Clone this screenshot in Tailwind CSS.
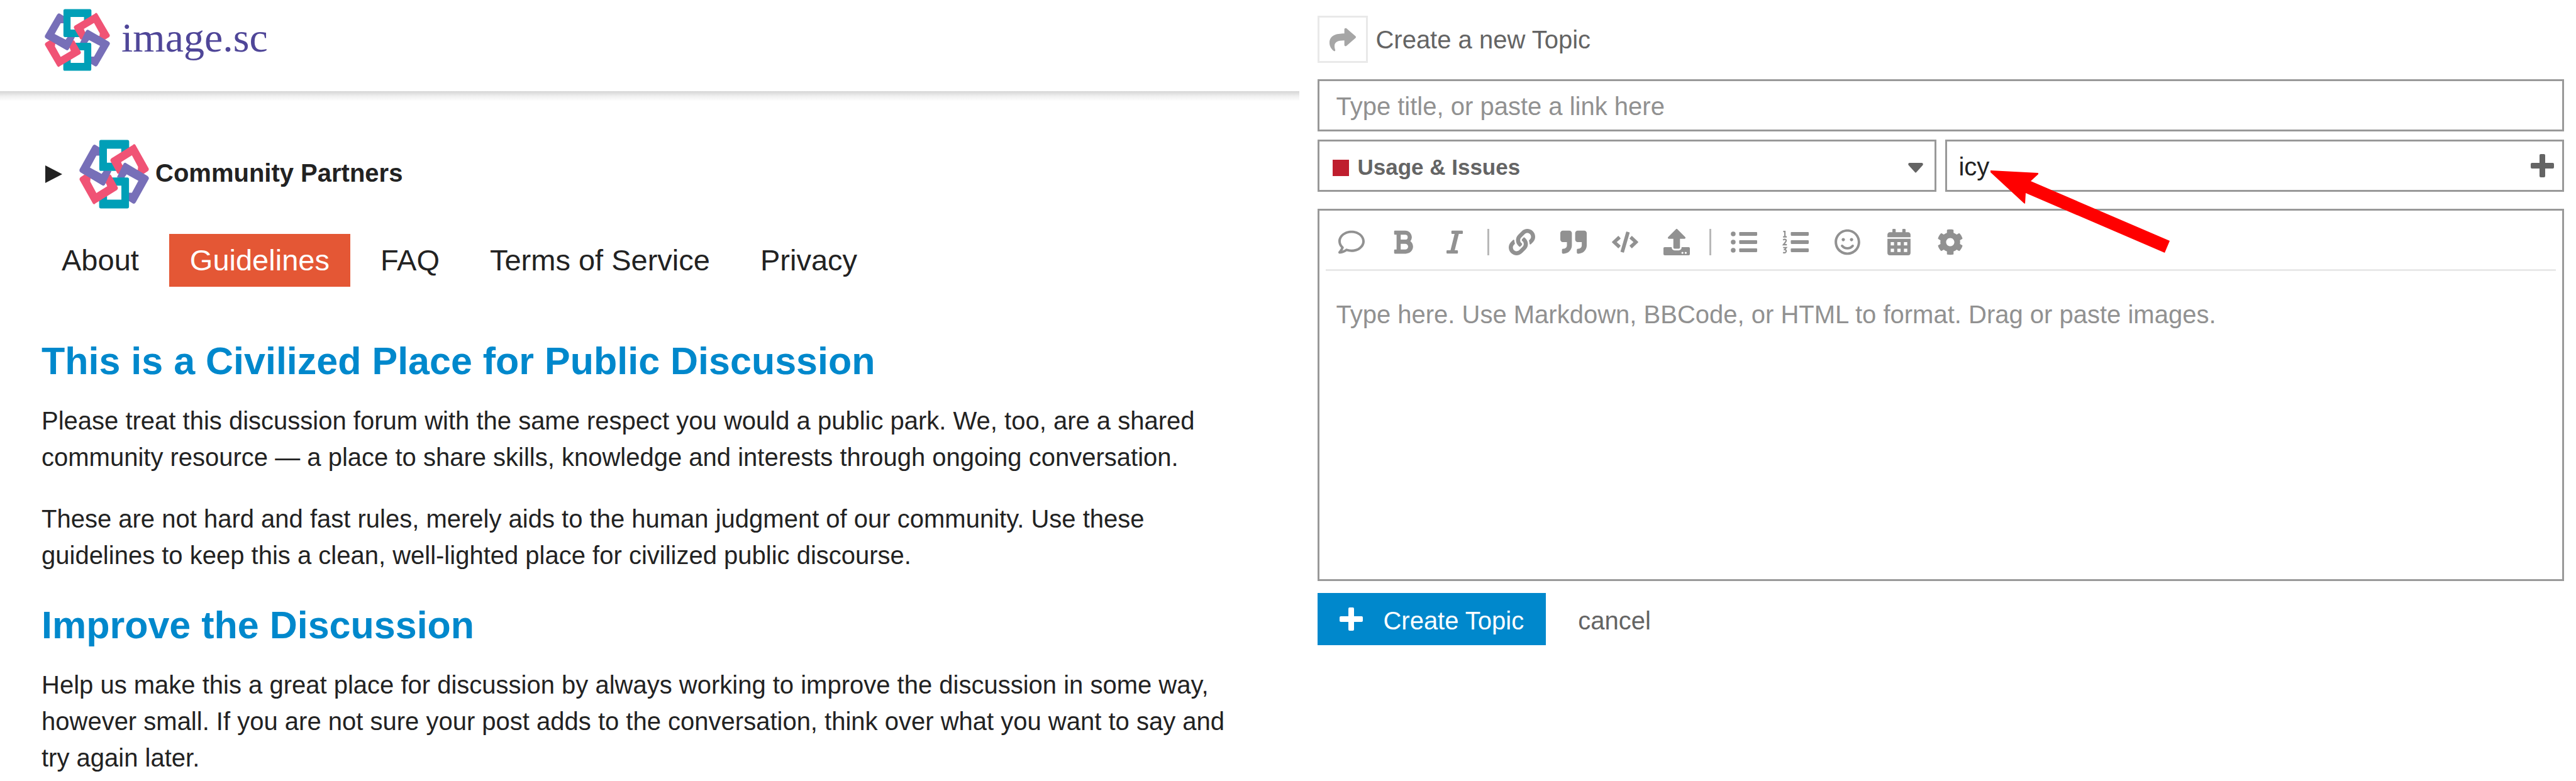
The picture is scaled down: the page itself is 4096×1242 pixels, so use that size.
<!DOCTYPE html>
<html lang="en">
<head>
<meta charset="utf-8">
<title>image.sc forum</title>
<script src="https://cdn.jsdelivr.net/npm/@tailwindcss/browser@4"></script>
</head>
<body class="min-h-screen overflow-x-hidden bg-white font-['Liberation_Sans',Arial,sans-serif] text-[40px] leading-[58px] text-[#222222]">
<svg class="absolute size-0" aria-hidden="true">
  <defs>
    <clipPath id="lower"><rect x="0" y="232" width="533" height="260"/></clipPath>
    <path id="teal" fill="#009fb7" d="M177 30H357Q369 30 369 42V100L315 132V87H217V178H262L285 232H177Q165 232 165 220V42Q165 30 177 30Z"/>
    <path id="pink" fill="#f05375" fill-rule="evenodd" d="M395 63Q403 53 412 63L502 215Q506 226 496 234L470 250H290L242 168Q238 158 248 150ZM388 130L314 174L320 190L350 225H428L430 205Z"/>
    <path id="purple" fill="#776fb8" fill-rule="evenodd" d="M330 186Q338 174 350 182L494 264Q508 273 502 286L414 436Q404 450 392 442L340 410V290L286 272ZM338 272L352 254L432 296L388 374H345V290Z"/>
    <symbol id="logo" viewBox="28 28 477 450" preserveAspectRatio="none">
      <use href="#purple" transform="rotate(180 266.5 253)"/>
      <use href="#teal"/>
      <use href="#pink"/>
      <use href="#purple"/>
      <use href="#teal" transform="rotate(180 266.5 253)"/>
      <use href="#pink" transform="rotate(180 266.5 253)"/>
      <g clip-path="url(#lower)"><use href="#purple" transform="rotate(180 266.5 253)"/></g>
    </symbol>
  </defs>
</svg>
<div class="flex">
  <div class="w-[50.45%] shrink-0">
    <header>
      <div class="flex h-[145px] items-start gap-[18px] pt-[14px] pl-[71px]">
        <svg class="h-[99px] w-[104px]" aria-hidden="true"><use href="#logo"/></svg>
        <a href="#" class="pt-[6px] font-['Liberation_Serif',serif] text-[66px] leading-[80px] text-[#4f4698]">image.sc</a>
      </div>
      <div class="h-4 bg-linear-to-b from-[#d5d5d5] via-[#f0f0f0] to-white"></div>
    </header>
    <main class="pt-[61px] pl-[66px]">
      <details>
        <summary class="flex h-[110px] list-none items-center pl-[6px] font-bold">
          <svg class="h-7 w-[27px]" viewBox="0 0 27 28" fill="#222222" aria-hidden="true"><path d="M0 0L27 14L0 28Z"/></svg>
          <svg class="mr-[10px] ml-[27px] h-[110px] w-[111px]" aria-hidden="true"><use href="#logo"/></svg>
          <span class="pb-1">Community Partners</span>
        </summary>
      </details>
      <nav class="mt-10 flex gap-4 text-[47px] leading-[84px]">
        <a href="#" class="px-8">About</a>
        <a href="#" class="bg-[#e45735] px-[33px] text-white">Guidelines</a>
        <a href="#" class="px-8">FAQ</a>
        <a href="#" class="px-8">Terms of Service</a>
        <a href="#" class="px-8">Privacy</a>
      </nav>
      <article class="max-w-[1900px]">
        <h2 class="mt-20 text-[61px] leading-[76px] font-bold text-[#0088cc]">This is a Civilized Place for Public Discussion</h2>
        <p class="mt-7">Please treat this discussion forum with the same respect you would a public park. We, too, are a shared community resource — a place to share skills, knowledge and interests through ongoing conversation.</p>
        <p class="mt-10">These are not hard and fast rules, merely aids to the human judgment of our community. Use these guidelines to keep this a clean, well-lighted place for civilized public discourse.</p>
        <h2 class="mt-11 text-[61px] leading-[76px] font-bold text-[#0088cc]">Improve the Discussion</h2>
        <p class="mt-7">Help us make this a great place for discussion by always working to improve the discussion in some way, however small. If you are not sure your post adds to the conversation, think over what you want to say and try again later.</p>
      </article>
    </main>
  </div>

  <form class="min-w-0 flex-1 pt-[25px] pr-[19px] pl-[29px] text-[#646464]">
    <div class="flex items-center gap-3">
      <button type="button" aria-label="Reply options" class="flex h-[75px] w-20 items-center justify-center border-[3px] border-[#e9e9e9]">
        <svg class="size-[42px]" viewBox="0 0 512 512" fill="#a6a6a6"><path d="M503.691 189.836L327.687 37.851C312.281 24.546 288 35.347 288 56.015v80.053C127.371 137.907 0 170.100 0 322.326c0 61.441 39.581 122.309 83.333 154.132 13.653 9.931 33.111-2.533 28.077-18.631C66.066 312.814 132.917 274.316 288 272.085V360c0 20.700 24.300 31.453 39.687 18.164l176.004-152c11.071-9.562 11.086-26.753 0-36.328z"/></svg>
      </button>
      <span>Create a new Topic</span>
    </div>
    <input type="text" aria-label="Title" placeholder="Type title, or paste a link here" class="mt-[26px] block h-[83px] w-full border-[3px] border-[#999999] px-[26px] pt-1 placeholder:text-[#919191]">
    <div class="mt-[13px] flex gap-[14px]">
      <div class="relative w-[984px] min-w-0">
        <select aria-label="Category" class="block h-[83px] w-full appearance-none border-[3px] border-[#999999] pt-1 pl-[60px] text-[35px] font-bold"><option>Usage &amp; Issues</option></select>
        <span class="pointer-events-none absolute inset-0 flex items-center justify-between pt-[6px] pr-[21px] pl-6" aria-hidden="true">
          <span class="size-[26px] bg-[#bf1e2e]"></span>
          <svg class="h-4 w-6" viewBox="0 0 24 16" fill="#646464"><path d="M2 0H22Q25 1 23 4L13 15Q12 16 11 15L1 4Q-1 1 2 0Z"/></svg>
        </span>
      </div>
      <div class="relative min-w-0 flex-1">
        <input type="text" aria-label="Tags" value="icy" class="block h-[83px] w-full border-[3px] border-[#999999] px-[18px] pt-1 text-[#222222]">
        <button type="button" aria-label="Add tag" class="absolute inset-y-0 right-4 flex items-center">
          <svg class="size-[37px]" viewBox="0 0 37 37" fill="#646464"><path d="M14 2Q14 0 16 0H21Q23 0 23 2V14H35Q37 14 37 16V21Q37 23 35 23H23V35Q23 37 21 37H16Q14 37 14 35V23H2Q0 23 0 21V16Q0 14 2 14H14Z"/></svg>
        </button>
        <svg class="pointer-events-none absolute top-[49px] left-[72px] h-[131px] w-[286px]" viewBox="0 0 286 131" fill="#ff0000" aria-hidden="true"><path d="M0 0L76 4V6L64 17L285 112L277 131L56 36L55 53L53 52L0 3Z"/></svg>
      </div>
    </div>
    <div class="mt-[27px] h-[592px] border-[3px] border-[#999999]">
      <div class="mx-[10px] flex h-24 items-center border-b-[3px] border-[#e9e9e9] pt-[7px] text-[#919191]">
        <button type="button" aria-label="Quote post" class="flex w-[82px] justify-center"><svg class="size-[42px]" viewBox="0 0 512 512" fill="currentColor"><path d="M256 32C114.600 32 0 125.100 0 240c0 47.600 19.900 91.200 52.900 126.300C38 405.700 7 439.100 6.500 439.500c-6.600 7-8.400 17.200-4.600 26S14.400 480 24 480c61.500 0 110-25.700 139.100-46.300C192 442.800 223.200 448 256 448c141.400 0 256-93.100 256-208S397.400 32 256 32zm0 368c-26.700 0-53.100-4.100-78.400-12.100l-22.700-7.200-19.500 13.800c-14.300 10.100-33.900 21.400-57.500 29 7.300-12.100 14.400-25.700 19.900-40.200l10.600-28.100-20.600-21.800C69.700 314.100 48 282.200 48 240c0-88.200 93.300-160 208-160s208 71.800 208 160-93.300 160-208 160z"/></svg></button>
        <button type="button" aria-label="Strong" class="flex w-[82px] justify-center"><svg class="h-[42px] w-[32px]" viewBox="0 0 384 512" fill="currentColor"><path d="M333.490 238a122 122 0 0 0 27-65.210C367.870 96.490 308 32 233.420 32H34a16 16 0 0 0-16 16v48a16 16 0 0 0 16 16h31.870v288H34a16 16 0 0 0-16 16v48a16 16 0 0 0 16 16h209.320c70.800 0 134.140-51.750 141-122.400 4.740-48.450-16.390-92.060-50.830-119.600zM145.660 112h87.760a48 48 0 0 1 0 96h-87.760zm87.760 288h-87.760V288h87.760a56 56 0 0 1 0 112z"/></svg></button>
        <button type="button" aria-label="Emphasis" class="flex w-[82px] justify-center"><svg class="h-[42px] w-[26px]" viewBox="0 0 320 512" fill="currentColor"><path d="M320 48v32a16 16 0 0 1-16 16h-62.760l-80 320H208a16 16 0 0 1 16 16v32a16 16 0 0 1-16 16H16a16 16 0 0 1-16-16v-32a16 16 0 0 1 16-16h62.760l80-320H112a16 16 0 0 1-16-16V48a16 16 0 0 1 16-16h192a16 16 0 0 1 16 16z"/></svg></button>
        <span class="mx-[11px] h-[42px] w-[3px] bg-[#b8b8b8]"></span>
        <button type="button" aria-label="Hyperlink" class="flex w-[82px] justify-center"><svg class="size-[42px]" viewBox="0 0 512 512" fill="currentColor"><path d="M326.612 185.391c59.747 59.809 58.927 155.698.36 214.590-.11.120-.24.250-.36.370l-67.200 67.200c-59.270 59.270-155.699 59.262-214.960 0-59.270-59.260-59.270-155.700 0-214.960l37.106-37.106c9.840-9.840 26.786-3.300 27.294 10.606.648 17.722 3.826 35.527 9.690 52.721 1.986 5.822.567 12.262-3.783 16.612l-13.087 13.087c-28.026 28.026-28.905 73.660-1.155 101.960 28.024 28.579 74.086 28.749 102.325.510l67.200-67.190c28.191-28.191 28.073-73.757 0-101.830-3.701-3.694-7.429-6.564-10.341-8.569a16.037 16.037 0 0 1-6.947-12.606c-.396-10.567 3.348-21.456 11.698-29.806l21.054-21.055c5.521-5.521 14.182-6.199 20.584-1.731a152.482 152.482 0 0 1 20.522 17.197zM467.547 44.449c-59.261-59.262-155.690-59.270-214.960 0l-67.200 67.200c-.12.120-.25.250-.36.370-58.566 58.892-59.387 154.781.36 214.590a152.454 152.454 0 0 0 20.521 17.196c6.402 4.468 15.064 3.789 20.584-1.731l21.054-21.055c8.350-8.350 12.094-19.239 11.698-29.806a16.037 16.037 0 0 0-6.947-12.606c-2.912-2.005-6.640-4.875-10.341-8.569-28.073-28.073-28.191-73.639 0-101.830l67.200-67.190c28.239-28.239 74.300-28.069 102.325.510 27.750 28.300 26.872 73.934-1.155 101.960l-13.087 13.087c-4.350 4.350-5.769 10.790-3.783 16.612 5.864 17.194 9.042 34.999 9.690 52.721.509 13.906 17.454 20.446 27.294 10.606l37.106-37.106c59.271-59.259 59.271-155.699.001-214.959z"/></svg></button>
        <button type="button" aria-label="Blockquote" class="flex w-[82px] justify-center"><svg class="size-[42px]" viewBox="0 0 512 512" fill="currentColor"><path d="M464 32H336c-26.500 0-48 21.500-48 48v128c0 26.500 21.500 48 48 48h80v64c0 35.300-28.700 64-64 64h-8c-13.300 0-24 10.700-24 24v48c0 13.300 10.700 24 24 24h8c88.400 0 160-71.600 160-160V80c0-26.500-21.500-48-48-48zm-288 0H48C21.500 32 0 53.500 0 80v128c0 26.500 21.500 48 48 48h80v64c0 35.300-28.700 64-64 64h-8c-13.300 0-24 10.700-24 24v48c0 13.300 10.700 24 24 24h8c88.400 0 160-71.600 160-160V80c0-26.500-21.500-48-48-48z"/></svg></button>
        <button type="button" aria-label="Preformatted text" class="flex w-[82px] justify-center"><svg class="h-[34px] w-[42px]" viewBox="0 0 640 512" fill="currentColor"><path d="M278.900 511.500l-61-17.700c-6.400-1.800-10-8.500-8.200-14.900L346.200 8.700c1.800-6.400 8.500-10 14.900-8.200l61 17.700c6.400 1.800 10 8.500 8.200 14.900L293.800 503.300c-1.900 6.400-8.500 10.100-14.900 8.200zm-114-112.200l43.500-46.400c4.600-4.900 4.300-12.700-.8-17.200L117 256l90.600-79.700c5.100-4.500 5.500-12.300.8-17.200l-43.500-46.400c-4.500-4.800-12.100-5.100-17-.5L3.800 247.200c-5.100 4.700-5.100 12.800 0 17.500l144.100 135.100c4.900 4.600 12.500 4.400 17-.5zm327.200.6l144.100-135.100c5.100-4.700 5.100-12.800 0-17.500L492.100 112.100c-4.800-4.500-12.400-4.300-17 .5L431.600 159c-4.600 4.900-4.300 12.700.8 17.200L523 256l-90.600 79.700c-5.100 4.500-5.500 12.300-.8 17.200l43.500 46.400c4.500 4.900 12.100 5.100 17 .6z"/></svg></button>
        <button type="button" aria-label="Upload" class="flex w-[82px] justify-center"><svg class="size-[42px]" viewBox="0 0 512 512" fill="currentColor"><path d="M296 384h-80c-13.300 0-24-10.700-24-24V192h-87.700c-17.800 0-26.700-21.500-14.100-34.100L242.300 5.700c7.500-7.500 19.800-7.500 27.300 0l152.200 152.200c12.600 12.600 3.700 34.100-14.100 34.100H320v168c0 13.300-10.700 24-24 24zm216-8v112c0 13.300-10.700 24-24 24H24c-13.300 0-24-10.700-24-24V376c0-13.300 10.700-24 24-24h136v8c0 30.900 25.100 56 56 56h80c30.900 0 56-25.100 56-56v-8h136c13.300 0 24 10.700 24 24zm-124 88c0-11-9-20-20-20s-20 9-20 20 9 20 20 20 20-9 20-20zm64 0c0-11-9-20-20-20s-20 9-20 20 9 20 20 20 20-9 20-20z"/></svg></button>
        <span class="mx-[11px] h-[42px] w-[3px] bg-[#b8b8b8]"></span>
        <button type="button" aria-label="Bulleted list" class="flex w-[82px] justify-center"><svg class="size-[42px]" viewBox="0 0 512 512" fill="currentColor"><circle cx="48" cy="98" r="46"/><circle cx="48" cy="256" r="46"/><circle cx="48" cy="414" r="46"/><rect x="164" y="62" width="348" height="72" rx="14"/><rect x="164" y="220" width="348" height="72" rx="14"/><rect x="164" y="378" width="348" height="72" rx="14"/></svg></button>
        <button type="button" aria-label="Numbered list" class="flex w-[82px] justify-center"><svg class="size-[42px]" viewBox="0 0 512 512" fill="currentColor"><rect x="164" y="62" width="348" height="72" rx="14"/><rect x="164" y="220" width="348" height="72" rx="14"/><rect x="164" y="378" width="348" height="72" rx="14"/><g fill="none" stroke="currentColor" stroke-width="26"><path d="M18 50H50V154M14 154H86"/><path d="M14 214Q44 194 68 208Q86 232 56 262L22 306H88"/><path d="M16 362H76L44 402Q78 404 76 434Q66 474 14 456"/></g></svg></button>
        <button type="button" aria-label="Emoji" class="flex w-[82px] justify-center"><svg class="h-[42px] w-[41px]" viewBox="0 0 496 512" fill="currentColor"><path d="M248 8C111 8 0 119 0 256s111 248 248 248 248-111 248-248S385 8 248 8zm0 448c-110.300 0-200-89.700-200-200S137.700 56 248 56s200 89.700 200 200-89.700 200-200 200zm-80-216c17.700 0 32-14.300 32-32s-14.300-32-32-32-32 14.300-32 32 14.300 32 32 32zm160 0c17.700 0 32-14.300 32-32s-14.300-32-32-32-32 14.300-32 32 14.300 32 32 32zm4 72.600c-20.800 25-51.500 39.400-84 39.400s-63.200-14.300-84-39.400c-8.500-10.200-23.700-11.500-33.800-3.100-10.200 8.500-11.500 23.600-3.100 33.800 30 36 74.100 56.600 120.900 56.600s90.900-20.600 120.900-56.600c8.500-10.200 7.100-25.300-3.100-33.800-10.100-8.400-25.300-7.100-33.800 3.100z"/></svg></button>
        <button type="button" aria-label="Insert date" class="flex w-[82px] justify-center"><svg class="h-[42px] w-[37px]" viewBox="0 0 448 512" fill="currentColor" fill-rule="evenodd"><path d="M400 64h-48V16c0-8.800-7.200-16-16-16h-32c-8.800 0-16 7.200-16 16v48H160V16c0-8.800-7.200-16-16-16h-32c-8.800 0-16 7.200-16 16v48H48C21.500 64 0 85.500 0 112v48h448v-48c0-26.500-21.500-48-48-48z"/><path d="M0 192H448V464Q448 512 400 512H48Q0 512 0 464ZM64 256V320H128V256ZM192 256V320H256V256ZM320 256V320H384V256ZM64 384V448H128V384ZM192 384V448H256V384ZM320 384V448H384V384Z"/></svg></button>
        <button type="button" aria-label="Options" class="flex w-[82px] justify-center"><svg class="size-[42px]" viewBox="0 0 512 512" fill="currentColor"><path d="M487.400 315.700l-42.600-24.600c4.300-23.200 4.300-47 0-70.200l42.600-24.600c4.900-2.800 7.100-8.600 5.500-14-11.100-35.600-30-67.800-54.700-94.600-3.800-4.100-10-5.100-14.800-2.300L380.800 110c-17.900-15.400-38.500-27.300-60.800-35.100V25.800c0-5.600-3.900-10.500-9.400-11.700-36.700-8.200-74.300-7.800-109.200 0-5.500 1.200-9.400 6.100-9.400 11.700V75c-22.200 7.900-42.800 19.800-60.800 35.100L88.700 85.500c-4.900-2.800-11-1.900-14.800 2.300-24.700 26.700-43.600 58.900-54.700 94.600-1.700 5.400.6 11.200 5.500 14L67.300 221c-4.300 23.200-4.300 47 0 70.200l-42.600 24.600c-4.900 2.800-7.100 8.600-5.500 14 11.100 35.600 30 67.800 54.700 94.600 3.800 4.100 10 5.100 14.800 2.300l42.600-24.600c17.900 15.400 38.500 27.300 60.800 35.100v49.200c0 5.600 3.900 10.500 9.400 11.700 36.700 8.200 74.300 7.800 109.200 0 5.500-1.200 9.400-6.100 9.400-11.700v-49.200c22.200-7.900 42.800-19.800 60.800-35.100l42.600 24.600c4.900 2.800 11 1.900 14.800-2.300 24.700-26.700 43.600-58.900 54.700-94.600 1.500-5.500-.7-11.300-5.600-14.100zM256 336c-44.100 0-80-35.900-80-80s35.900-80 80-80 80 35.900 80 80-35.900 80-80 80z"/></svg></button>
      </div>
      <textarea aria-label="Post body" placeholder="Type here. Use Markdown, BBCode, or HTML to format. Drag or paste images." class="block h-[490px] w-full resize-none px-[26px] pt-10 placeholder:text-[#919191]"></textarea>
    </div>
    <div class="mt-[19px] flex items-center">
      <button type="submit" class="flex h-[83px] items-center gap-8 bg-[#0088cc] px-[35px] text-white">
        <svg class="size-[37px]" viewBox="0 0 37 37" fill="currentColor" aria-hidden="true"><path d="M14 2Q14 0 16 0H21Q23 0 23 2V14H35Q37 14 37 16V21Q37 23 35 23H23V35Q23 37 21 37H16Q14 37 14 35V23H2Q0 23 0 21V16Q0 14 2 14H14Z"/></svg>
        <span class="pt-1">Create Topic</span>
      </button>
      <a href="#" class="ml-[51px] pt-1">cancel</a>
    </div>
  </form>
</div>
</body>
</html>
